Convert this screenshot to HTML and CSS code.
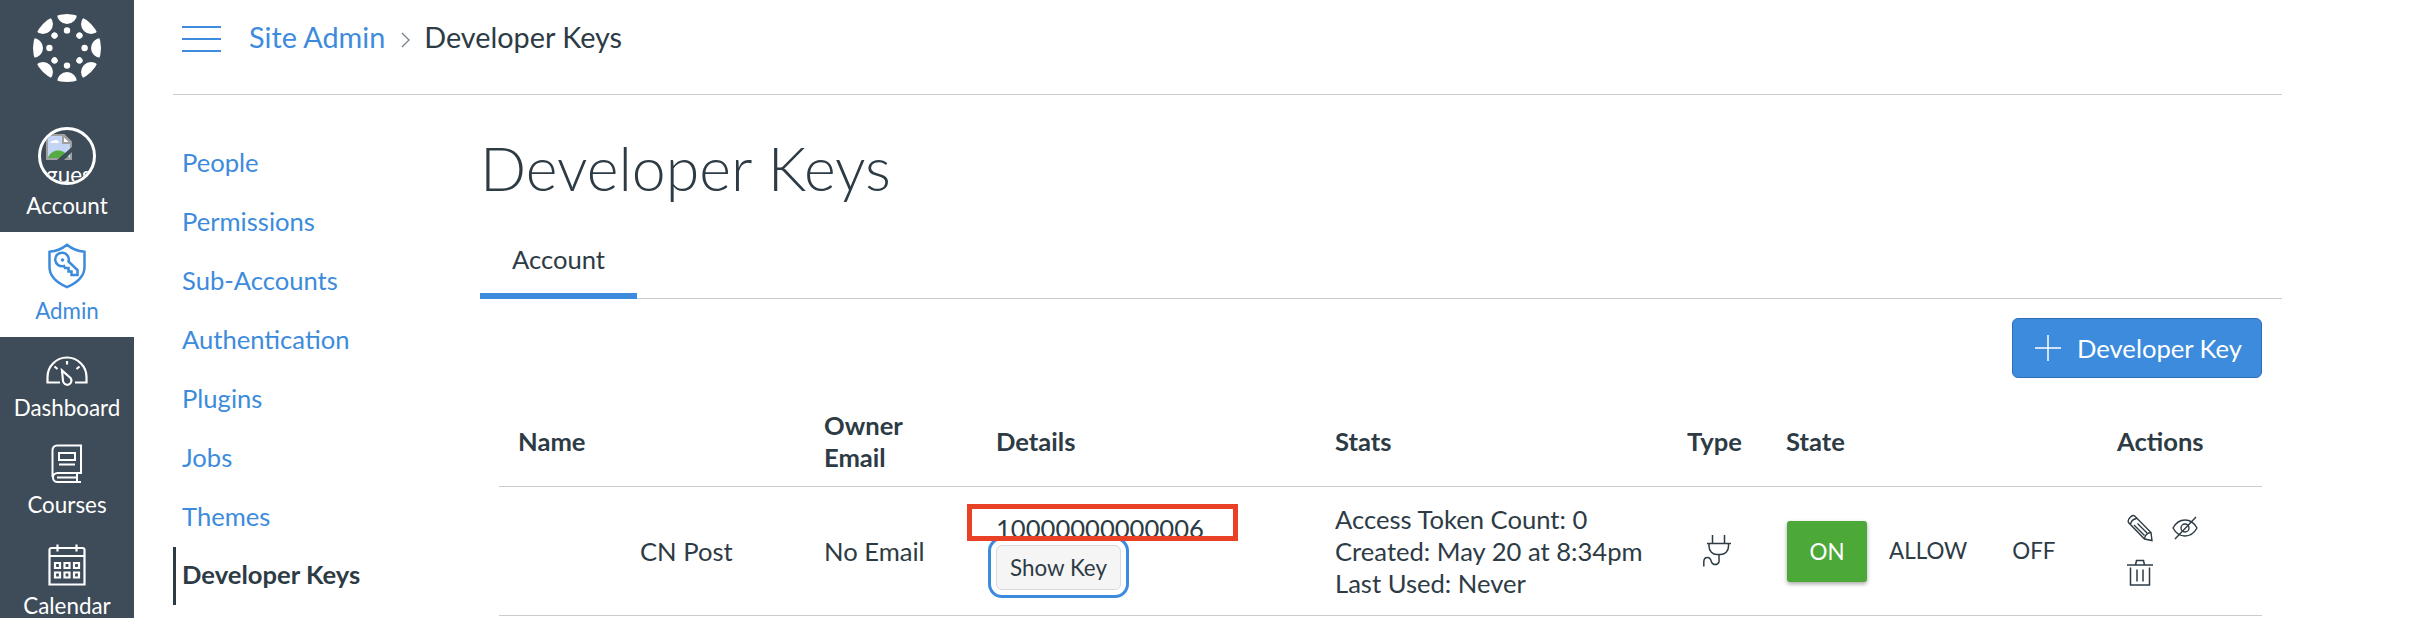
FILE: index.html
```html
<!DOCTYPE html>
<html lang="en">
<head>
  <meta charset="UTF-8">
  <meta name="viewport" content="width=device-width, initial-scale=1.0">
  <title>Developer Keys</title>
  <link rel="stylesheet" href="styles.css">
</head>
<body>
  <nav class="global-nav">
    <a class="logo" href="#">
      <svg width="68" height="68" viewBox="-34 -34 68 68" fill="#fff">
        <defs>
          <clipPath id="ring"><circle r="34"/></clipPath>
        </defs>
        <g clip-path="url(#ring)">
          <circle cy="-34" r="10"/>
          <circle cy="-34" r="10" transform="rotate(45)"/>
          <circle cy="-34" r="10" transform="rotate(90)"/>
          <circle cy="-34" r="10" transform="rotate(135)"/>
          <circle cy="-34" r="10" transform="rotate(180)"/>
          <circle cy="-34" r="10" transform="rotate(225)"/>
          <circle cy="-34" r="10" transform="rotate(270)"/>
          <circle cy="-34" r="10" transform="rotate(315)"/>
        </g>
        <circle cy="-17.6" r="3.2"/>
        <circle cy="-17.6" r="3.2" transform="rotate(45)"/>
        <circle cy="-17.6" r="3.2" transform="rotate(90)"/>
        <circle cy="-17.6" r="3.2" transform="rotate(135)"/>
        <circle cy="-17.6" r="3.2" transform="rotate(180)"/>
        <circle cy="-17.6" r="3.2" transform="rotate(225)"/>
        <circle cy="-17.6" r="3.2" transform="rotate(270)"/>
        <circle cy="-17.6" r="3.2" transform="rotate(315)"/>
      </svg>
    </a>
    <a class="nav-item account" href="#">
      <span class="avatar">
        <svg width="26" height="26" viewBox="0 0 26 26">
          <path d="M1 1h17l7 7v17H1z" fill="#c3d4f5" stroke="#a0a0a0" stroke-width="2"/>
          <path d="M4 9a3 3 0 0 1 3-2 3.500 3.500 0 0 1 6 2z" fill="#fff"/>
          <path d="M2 24c3-10 17-10 21 0z" fill="#56ab43"/>
          <path d="M17 1v8h8z" fill="#fff" stroke="#a0a0a0" stroke-width="2"/>
          <path d="M11 26L26 13v5l-8 8z" fill="#3e4b58"/>
        </svg>
        <span class="alt">guest</span>
      </span>
      <span>Account</span>
    </a>
    <a class="nav-item admin active" href="#">
      <svg width="38" height="46" viewBox="0 0 38 46" fill="none" stroke="currentColor" stroke-width="2.500">
        <path d="M19 1.800C14 6 8 8.300 1.500 8.800V24c0 9 8 16 17.500 20.200C28.500 40 36.500 33 36.500 24V8.800C30 8.300 24 6 19 1.800z"/>
        <path d="M20.500 18.500L29.500 27v5h-6v-3.500h-3V25h-3.500l-1-2A6.800 6.800 0 1 1 20.500 18.500z"/>
        <circle cx="14.500" cy="17" r="1.300" fill="currentColor" stroke-width="1"/>
      </svg>
      <span>Admin</span>
    </a>
    <a class="nav-item dashboard" href="#">
      <svg width="42" height="30" viewBox="0 0 42 30" fill="none" stroke="currentColor" stroke-width="2.200">
        <path d="M14 26.500H1.500V21a19.500 19.500 0 0 1 39 0v5.500H29"/>
        <path d="M16 14.500l1 10.500a4.200 4.200 0 1 0 7.500-3z"/>
        <path d="M21 5v3.500M8.500 10.500l3 2.500M33.500 10.500l-3 2.500"/>
      </svg>
      <span>Dashboard</span>
    </a>
    <a class="nav-item courses" href="#">
      <svg width="32" height="40" viewBox="0 0 32 40" fill="none" stroke="currentColor" stroke-width="2">
        <path d="M30 29V1.500H6a4.500 4.500 0 0 0-4.500 4.500v27M31 29H6.500a4.500 4.500 0 0 0 0 9H30M6 33.500h20M26 29v9"/>
        <path d="M8 9h16v7H8zM8 20.500h16"/>
      </svg>
      <span>Courses</span>
    </a>
    <a class="nav-item calendar" href="#">
      <svg width="38" height="42" viewBox="0 0 38 42" fill="none" stroke="currentColor" stroke-width="2.200">
        <path d="M1.500 12V6a2 2 0 0 1 2-2h31a2 2 0 0 1 2 2v34.500h-35zM1.500 12h35M9.500 .5v7M28.500 .5v7"/>
        <path d="M7 19h5v5H7zM16.500 19h5v5h-5zM26 19h5v5h-5zM7 28.500h5v5H7zM16.500 28.500h5v5h-5zM26 28.500h5v5h-5z"/>
      </svg>
      <span>Calendar</span>
    </a>
  </nav>

  <div class="wrapper">
    <header class="crumbs">
      <button class="menu-toggle"><i></i><i></i><i></i></button>
      <a href="#">Site Admin</a>
      <svg class="sep" width="9" height="16" viewBox="0 0 9 16" fill="none" stroke="#73818c" stroke-width="1.300"><path d="M1 1l7 7-7 7"/></svg>
      <span>Developer Keys</span>
    </header>
    <div class="columns">
      <ul class="section-nav">
        <li><a href="#">People</a></li>
        <li><a href="#">Permissions</a></li>
        <li><a href="#">Sub-Accounts</a></li>
        <li><a href="#">Authentication</a></li>
        <li><a href="#">Plugins</a></li>
        <li><a href="#">Jobs</a></li>
        <li><a href="#">Themes</a></li>
        <li><a class="active" href="#">Developer Keys</a></li>
      </ul>
      <main class="content">
        <h1>Developer Keys</h1>
        <div class="tabs"><a class="tab" href="#">Account</a></div>
        <div class="panel">
          <div class="toolbar">
            <button class="btn-primary">
              <svg width="26" height="26" viewBox="0 0 26 26" fill="none" stroke="#fff" stroke-width="1.500"><path d="M13 0v26M0 13h26"/></svg>
              Developer Key
            </button>
          </div>
          <table>
            <colgroup>
              <col class="c-name"><col class="c-owner"><col class="c-details"><col class="c-stats">
              <col class="c-type"><col class="c-state"><col class="c-actions">
            </colgroup>
            <thead>
              <tr>
                <th>Name</th>
                <th>Owner Email</th>
                <th>Details</th>
                <th>Stats</th>
                <th>Type</th>
                <th>State</th>
                <th>Actions</th>
              </tr>
            </thead>
            <tbody>
              <tr>
                <td class="name">CN Post</td>
                <td>No Email</td>
                <td>
                  <div class="key">
                    <span>10000000000006</span>
                    <button class="show-key">Show Key</button>
                    <div class="highlight"></div>
                  </div>
                </td>
                <td>
                  <div>Access Token Count: 0</div>
                  <div>Created: May 20 at 8:34pm</div>
                  <div>Last Used: Never</div>
                </td>
                <td class="type">
                  <svg width="28" height="34" viewBox="0 0 28 34" fill="none" stroke="currentColor" stroke-width="1.500">
                    <path d="M9.500 1v8M21.500 1v8M4 9.500h24M6 9.500v3a8 8 0 0 0 8 8h3.500a8 8 0 0 0 8-8v-3"/>
                    <path d="M16 20.500V28a4 4 0 0 1-7.500 0c-.5-2-1-4.500-4-4.500S.8 26 .8 28v4.500"/>
                  </svg>
                </td>
                <td>
                  <div class="state">
                    <span class="on">ON</span>
                    <span class="allow">ALLOW</span>
                    <span class="off">OFF</span>
                  </div>
                </td>
                <td class="actions-cell">
                  <div class="actions">
                    <svg width="26" height="28" viewBox="0 0 26 28" fill="none" stroke="currentColor" stroke-width="1.400">
                      <path d="M1.500 8.500C0 6 4.500 .5 7.500 1.800L24 18.500l1 8-7.500-1.500zM3.500 10.500c.5-3 3-5.500 6-6M17.500 25c0-3.500 3-6.500 6.500-6.500M7 11l10.500 10.500M10.500 9.500L20 19"/>
                    </svg>
                    <svg width="26" height="24" viewBox="0 0 26 24" fill="none" stroke="currentColor" stroke-width="1.400">
                      <path d="M1 12c3-5.500 7.500-8 12-8s9 2.500 12 8c-3 5.500-7.500 8-12 8s-9-2.500-12-8zM24 1L3 23"/>
                      <circle cx="13" cy="12" r="4"/>
                    </svg>
                    <svg width="26" height="28" viewBox="0 0 26 28" fill="none" stroke="currentColor" stroke-width="1.500">
                      <path d="M0 6h26M3.500 8.500V26h19V8.500M8.500 6l1-4.500h7l1 4.500M10 10.500v12M16 10.500v12"/>
                    </svg>
                  </div>
                </td>
              </tr>
            </tbody>
          </table>
        </div>
      </main>
    </div>
  </div>
</body>
</html>
```
FILE: styles.css
```css
* {
  box-sizing: border-box;
}
body {
  display: flex;
  margin: 0;
  height: 618px;
  overflow: hidden;
  background: #fff;
  color: #2d3b45;
  font-family: Lato, "Liberation Sans", sans-serif;
  font-size: 25.6px;
  line-height: 32px;
}
a {
  color: #3d8bdc;
  text-decoration: none;
}
button {
  font-family: inherit;
}
svg {
  display: block;
  flex: none;
}

/* global nav */
.global-nav {
  flex: none;
  width: 134px;
  background: #3e4b58;
}
.logo {
  display: flex;
  justify-content: center;
  height: 114px;
  padding-top: 14px;
}
.nav-item {
  display: flex;
  flex-direction: column;
  align-items: center;
  justify-content: space-between;
  color: #fff;
  font-size: 22.4px;
  line-height: 28px;
}
.account {
  height: 118px;
  padding: 13px 0 12px;
}
.avatar {
  width: 58px;
  height: 58px;
  padding: 4px 5px;
  overflow: hidden;
  border: 3px solid #fff;
  border-radius: 50%;
}
.alt {
  display: block;
  line-height: 30px;
}
.admin {
  height: 105px;
  padding: 11px 0 12px;
}
.nav-item.active {
  background: #fff;
  color: #3d8bdc;
}
.dashboard {
  height: 98px;
  padding: 19px 0 13px;
}
.courses {
  height: 97px;
  padding: 9px 0 13px;
}
.calendar {
  height: 101px;
  padding: 12px 0 13px;
}

.wrapper {
  width: 2148px;
  padding-left: 39px;
}
.crumbs {
  display: flex;
  align-items: center;
  height: 95px;
  padding: 0 0 20px 9px;
  border-bottom: 1px solid #c7cdd1;
  font-size: 28.8px;
}
.menu-toggle {
  display: flex;
  flex-direction: column;
  justify-content: space-between;
  width: 39px;
  height: 26px;
  margin: 3px 28px 0 0;
  padding: 0;
  border: 0;
  background: none;
}
.menu-toggle i {
  height: 2px;
  background: #3d8bdc;
}
.sep {
  margin: 5px 14px 0 16px;
}

.columns {
  display: flex;
}
.section-nav {
  width: 307px;
  margin: 0;
  padding: 39px 0 0;
  list-style: none;
}
.section-nav a {
  display: block;
  height: 58px;
  margin-bottom: 1px;
  padding: 12px 0 0 9px;
}
.section-nav .active {
  padding: 11px 0 0 6px;
  border-left: 3px solid #2d3b45;
  color: #2d3b45;
  font-weight: bold;
}

.content {
  flex: 1;
}
h1 {
  margin: 35px 0 3px;
  font-size: 60.8px;
  font-weight: 300;
  line-height: 76px;
}
.tabs {
  display: flex;
  height: 90px;
  border-bottom: 1px solid #c7cdd1;
}
.tab {
  height: 90px;
  padding: 34px 32px 0;
  border-bottom: 6px solid #3d8bdc;
  color: #2d3b45;
}
.panel {
  padding: 19px 20px 0 19px;
}
.toolbar {
  display: flex;
  justify-content: flex-end;
}
.btn-primary {
  display: flex;
  align-items: center;
  gap: 16px;
  width: 250px;
  height: 60px;
  padding: 0 0 1px 22px;
  border: 1px solid #2b70b5;
  border-radius: 6px;
  background: #3d8bdc;
  color: #fff;
  font-size: 25.6px;
}

/* keys table */
table {
  width: 1763px;
  table-layout: fixed;
  border-collapse: collapse;
}
.c-name { width: 305px; }
.c-owner { width: 172px; }
.c-details { width: 339px; }
.c-stats { width: 352px; }
.c-type { width: 100px; }
.c-state { width: 330px; }
th, td {
  padding: 0 20px;
  border-bottom: 1px solid #c7cdd1;
  text-align: left;
}
th {
  height: 108px;
  padding-top: 18px;
}
td {
  height: 129px;
}
th:nth-child(5), th:nth-child(6) {
  padding-right: 0;
}
th:nth-child(1), th:nth-child(6) {
  padding-left: 19px;
}
.name {
  padding-left: 141px;
}
.key {
  position: relative;
}
.key span {
  display: block;
}
.show-key {
  display: block;
  width: 125px;
  height: 45px;
  margin-top: 1px;
  padding: 0;
  outline: 3px solid #3d8bdc;
  outline-offset: 5px;
  border: 1px solid #d7dade;
  border-radius: 6px;
  background: #f5f5f5;
  color: #2d3b45;
  font-size: 22.4px;
}
.highlight {
  position: absolute;
  left: -29px;
  top: -8px;
  width: 271px;
  height: 37px;
  border: 5px solid #ea4025;
}
.type {
  padding-left: 36px;
}
.state {
  display: flex;
  align-items: center;
  margin-top: 1px;
  font-size: 22.4px;
}
.on {
  width: 80px;
  height: 61px;
  border-radius: 3px;
  background: #4ca937;
  box-shadow: 0 2px 4px rgba(0, 0, 0, 0.35);
  color: #fff;
  line-height: 61px;
  text-align: center;
}
.allow {
  margin-left: 22px;
}
.off {
  margin-left: 45px;
}
.actions-cell {
  padding-left: 30px;
}
.actions {
  display: flex;
  flex-wrap: wrap;
  align-items: center;
  gap: 17px 19px;
  width: 80px;
}
```
